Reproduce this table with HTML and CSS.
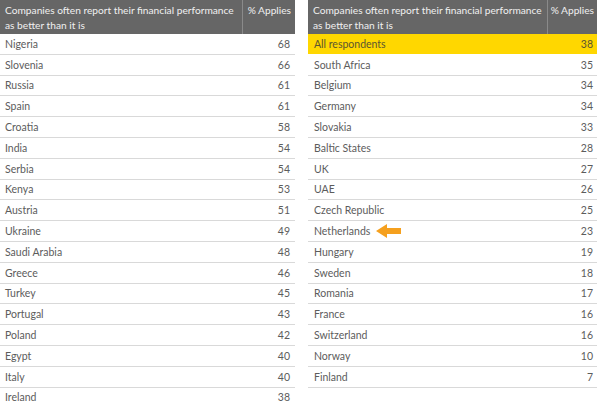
FILE: index.html
```html
<!DOCTYPE html>
<html>
<head>
<meta charset="utf-8">
<link rel="stylesheet" href="styles.css">
</head>
<body>
<div class="page">
  <div class="table left">
    <div class="head">
      <div class="hq">Companies often report their financial performance<br>as better than it is</div>
      <div class="hp">% Applies</div>
    </div>
    <div class="row"><span>Nigeria</span><span>68</span></div>
    <div class="row"><span>Slovenia</span><span>66</span></div>
    <div class="row"><span>Russia</span><span>61</span></div>
    <div class="row"><span>Spain</span><span>61</span></div>
    <div class="row"><span>Croatia</span><span>58</span></div>
    <div class="row"><span>India</span><span>54</span></div>
    <div class="row"><span>Serbia</span><span>54</span></div>
    <div class="row"><span>Kenya</span><span>53</span></div>
    <div class="row"><span>Austria</span><span>51</span></div>
    <div class="row"><span>Ukraine</span><span>49</span></div>
    <div class="row"><span>Saudi Arabia</span><span>48</span></div>
    <div class="row"><span>Greece</span><span>46</span></div>
    <div class="row"><span>Turkey</span><span>45</span></div>
    <div class="row"><span>Portugal</span><span>43</span></div>
    <div class="row"><span>Poland</span><span>42</span></div>
    <div class="row"><span>Egypt</span><span>40</span></div>
    <div class="row"><span>Italy</span><span>40</span></div>
    <div class="row"><span>Ireland</span><span>38</span></div>
  </div>
  <div class="table right">
    <div class="head">
      <div class="hq">Companies often report their financial performance<br>as better than it is</div>
      <div class="hp">% Applies</div>
    </div>
    <div class="row all"><span>All respondents</span><span>38</span></div>
    <div class="row"><span>South Africa</span><span>35</span></div>
    <div class="row"><span>Belgium</span><span>34</span></div>
    <div class="row"><span>Germany</span><span>34</span></div>
    <div class="row"><span>Slovakia</span><span>33</span></div>
    <div class="row"><span>Baltic States</span><span>28</span></div>
    <div class="row"><span>UK</span><span>27</span></div>
    <div class="row"><span>UAE</span><span>26</span></div>
    <div class="row"><span>Czech Republic</span><span>25</span></div>
    <div class="row"><span class="name">Netherlands <svg class="arrow" width="25" height="14" viewBox="0 0 25 14"><path d="M0 7 L11 0 L11 4 L25 4 L25 10 L11 10 L11 14 Z" fill="#f5a01e"/></svg></span><span>23</span></div>
    <div class="row"><span>Hungary</span><span>19</span></div>
    <div class="row"><span>Sweden</span><span>18</span></div>
    <div class="row"><span>Romania</span><span>17</span></div>
    <div class="row"><span>France</span><span>16</span></div>
    <div class="row"><span>Switzerland</span><span>16</span></div>
    <div class="row"><span>Norway</span><span>10</span></div>
    <div class="row"><span>Finland</span><span>7</span></div>
  </div>
</div>
</body>
</html>
```
FILE: styles.css
```css
html, body {
  margin: 0;
  padding: 0;
  background: #ffffff;
}
body {
  font-family: Lato, "Open Sans", sans-serif;
  font-size: 10.5px;
  color: #5c5c5c;
}
.page {
  display: flex;
  gap: 13px;
  width: 600px;
  height: 405px;
  overflow: hidden;
}
.table.left {
  width: 295px;
}
.table.right {
  width: 289px;
}
.head {
  display: flex;
  height: 34px;
  background: #666666;
  color: #f0f0f0;
  line-height: 15px;
  font-size: 10.2px;
}
.hq {
  flex: 1;
  padding: 3px 0 0 5px;
  border-right: 1px solid #8a8a8a;
  white-space: nowrap;
  overflow: hidden;
}
.left .hp {
  width: 52px;
  padding: 3px 4px 0 0;
  text-align: right;
  box-sizing: border-box;
  white-space: nowrap;
}
.right .hp {
  width: 49px;
  padding: 3px 3px 0 0;
  text-align: right;
  box-sizing: border-box;
  white-space: nowrap;
}
.row {
  display: flex;
  justify-content: space-between;
  align-items: center;
  height: 19.8px;
  border-bottom: 1px solid #d9d9d9;
  padding: 0 5px 0 5px;
}
.right .row {
  padding: 0 4px 0 6px;
}
.row.all {
  background: #ffd700;
  color: #5b5530;
  border-bottom-color: #ffffff;
}
.name {
  display: flex;
  align-items: center;
}
.arrow {
  margin-left: 6px;
}
```
